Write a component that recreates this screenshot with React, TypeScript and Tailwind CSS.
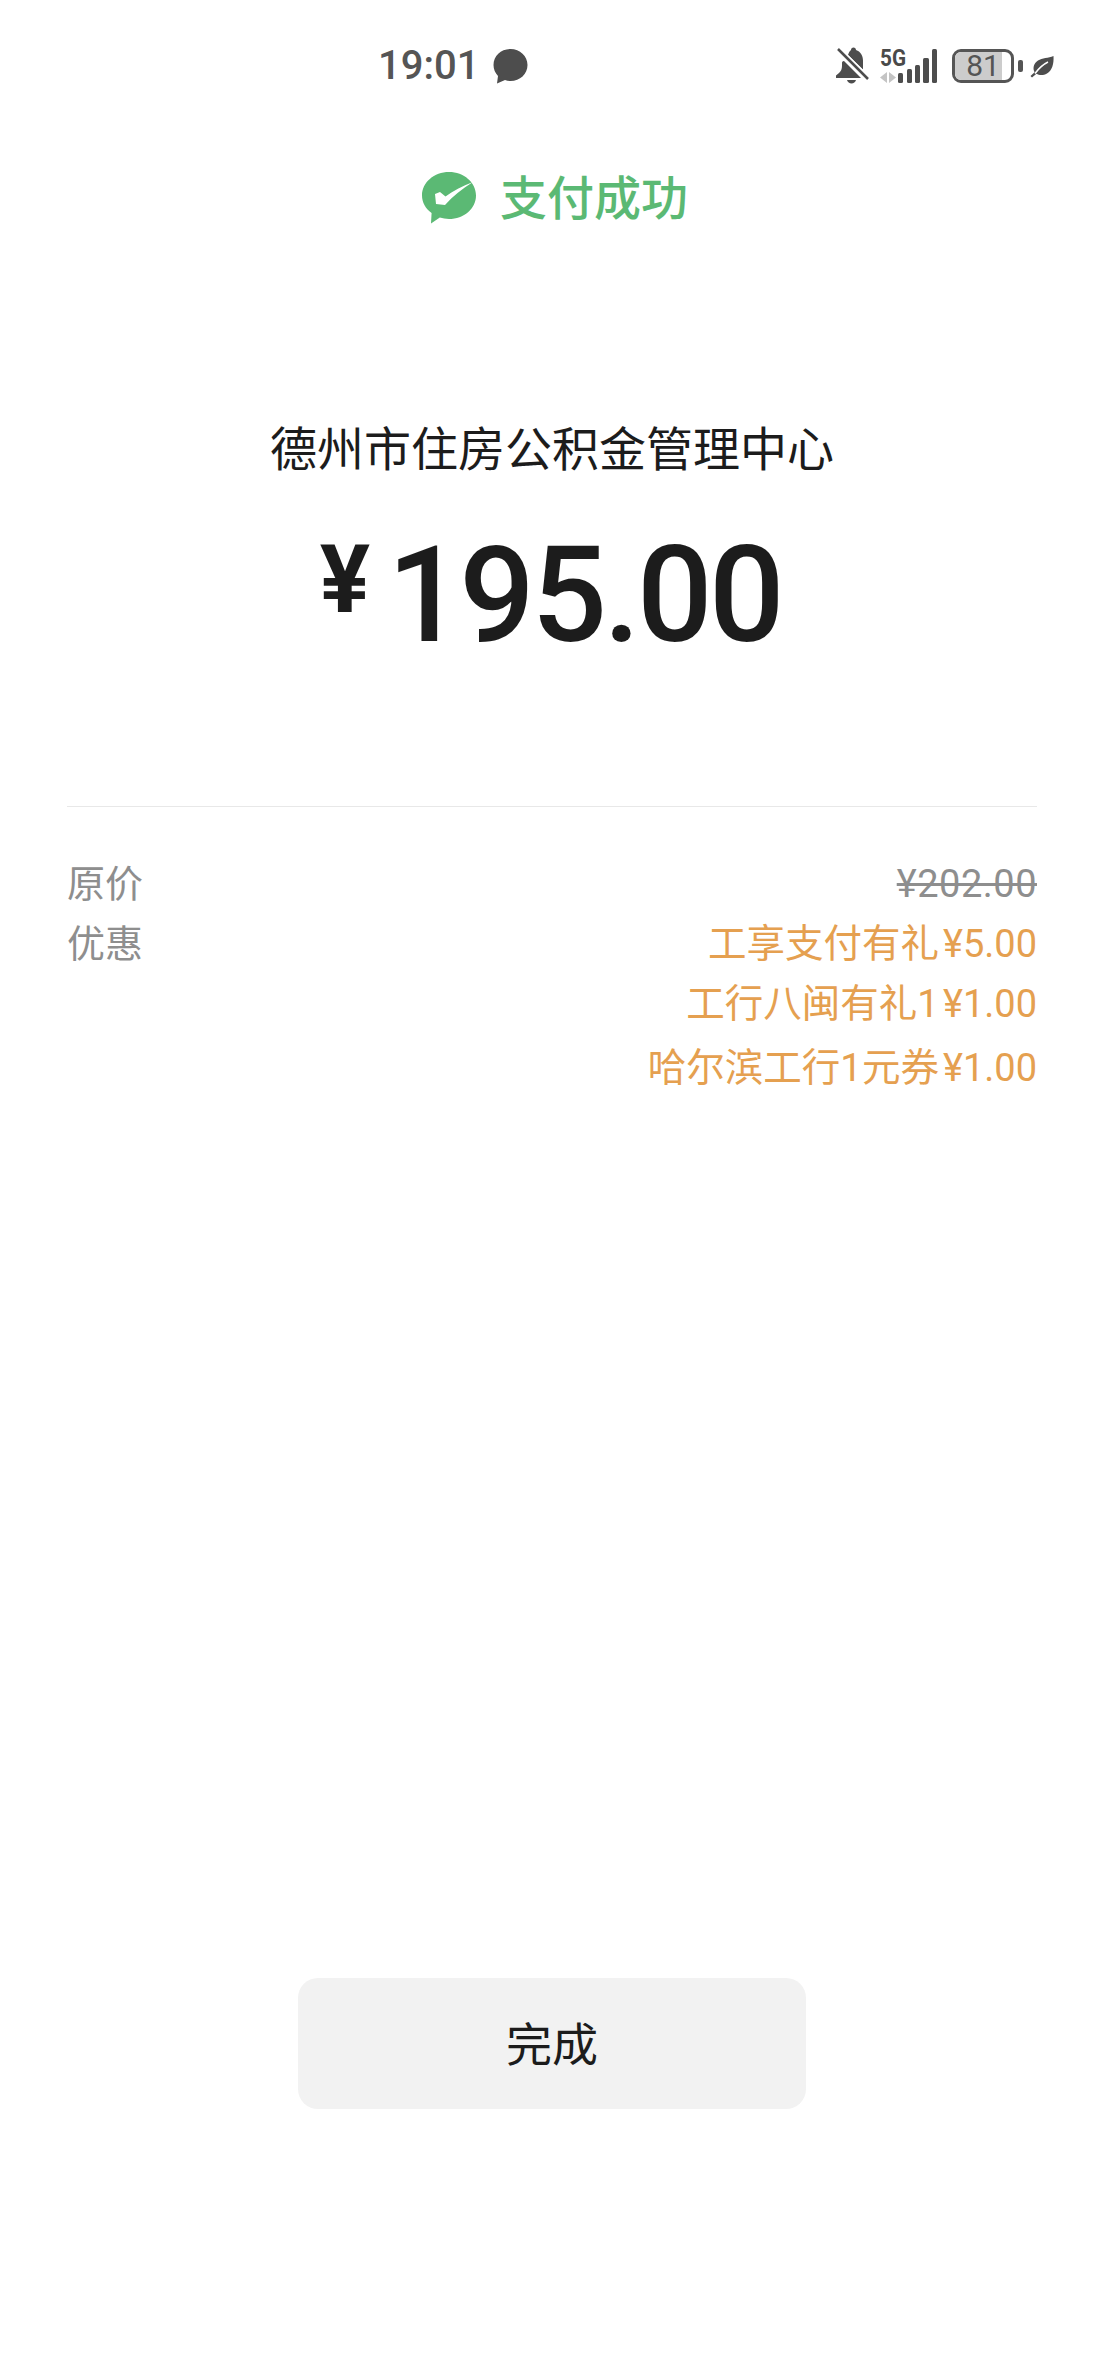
const font = "font-['Roboto','Noto_Sans_CJK_SC',sans-serif]"

function WeChatBubble() {
  return (
    <svg width="35" height="36" viewBox="0 0 35 36">
      <path d="M17.500 1C27 1 34.500 8 34.500 17S27 33 17.500 33c-2 0-3.800-.3-5.500-.9L4 35.500l1-7.500C2.200 25 .5 21.200.5 17 .5 8 8 1 17.500 1z" fill="#4d4d4d" />
    </svg>
  )
}

function SignalIcons() {
  return (
    <svg width="58" height="42" viewBox="0 0 58 42">
      <text x="0" y="21" fontSize="23" fontWeight="700" fill="#4a4a4a" fontFamily="Roboto" textLength="26" lengthAdjust="spacingAndGlyphs">5G</text>
      <path d="M7 27v11l-7-5.500zM9 38V27l7 5.500z" fill="#c4c4c4" />
      <rect x="18" y="28" width="5" height="10" rx="1.500" fill="#4d4d4d" />
      <rect x="27" y="24" width="5" height="14" rx="1.500" fill="#4d4d4d" />
      <rect x="35" y="20" width="5" height="18" rx="1.500" fill="#4d4d4d" />
      <rect x="43" y="13" width="6" height="25" rx="1.500" fill="#4d4d4d" />
      <rect x="52" y="4" width="5" height="34" rx="1.500" fill="#4d4d4d" />
    </svg>
  )
}

function StatusBar() {
  return (
    <div className="h-[132px] pl-[378px] pr-[50px] flex items-center justify-between text-[#555555]">
      <div className="flex items-center gap-[14px]">
        <span className="text-[40px] leading-none font-medium">19:01</span>
        <WeChatBubble />
      </div>
      <div className="flex items-center">
        <svg width="34" height="40" viewBox="0 0 34 40" className="mr-[10px]">
          <path d="M15 4c0-1.500 1-2.500 2.500-2.500S20 2.500 20 4c4.500 1.500 7 5.500 7 10.500v9L12 9c.8-2.300 1.500-4 3-5zM8 15l17 17H0v-2.500l3-2.500c2-2 3-4 3-7v-3c0-1 .3-2 2-2z" fill="#4d4d4d" />
          <path d="M11 34h9c-.6 2-2.400 3.500-4.500 3.500S11.600 36 11 34z" fill="#4d4d4d" />
          <path d="M2 3l30 30" stroke="#fff" strokeWidth="6" />
          <path d="M2 3l30 30" stroke="#4d4d4d" strokeWidth="2.500" />
        </svg>
        <SignalIcons />
        <div className="ml-[14px] relative w-[62px] h-[34px] rounded-[9px] border-[3px] border-[#555555] overflow-hidden flex items-center justify-center">
          <div className="absolute inset-y-0 left-0 w-[47px] bg-[#cccccc]" />
          <span className="relative text-[30px] leading-none">81</span>
        </div>
        <div className="ml-[4px] w-[5px] h-[12px] rounded-[2px] bg-[#555555]" />
        <svg width="24" height="23" viewBox="0 0 24 23" className="ml-[7px]">
          <path d="M23.500 1c.5 8-1.500 14.500-6.500 17.500-4 2.300-8 1.800-10.500.2L2 22.500.5 21l4.100-3.800C2.500 13.500 3.500 8.500 8 5.500 12 3 18.500 3 23.500 1z" fill="#4d4d4d" />
          <path d="M5 18.500C9 13 13 9.500 18 7" stroke="#fff" strokeWidth="1.500" fill="none" />
        </svg>
      </div>
    </div>
  )
}

function SuccessHeader() {
  return (
    <div className="mt-[40px] pl-[6px] flex items-center justify-center gap-[24px]">
      <svg width="54" height="52" viewBox="0 0 54 52">
        <path d="M27 0c14.900 0 27 10.500 27 23.500S41.900 47 27 47c-3.200 0-6.300-.5-9.200-1.400L9 51.500 9.600 41C3.700 36.700 0 30.500 0 23.500 0 10.500 12.100 0 27 0z" fill="#5bb974" />
        <path d="M13 22l5-2 5.500 4.500C31 19 40 14 51 10 40 17 31 24 23 33l-9-1z" fill="#fff" />
      </svg>
      <span className="text-[47px] leading-none font-medium text-[#5bb974]">支付成功</span>
    </div>
  )
}

function Amount() {
  return (
    <div className="mt-[198px] flex flex-col items-center">
      <div className="text-[47px] leading-[56px] text-[#1c1c1c]">德州市住房公积金管理中心</div>
      <div className="mt-[51px] pr-[3px] flex items-start text-[#1c1c1c] font-medium leading-none">
        <span className="text-[94px] leading-none mt-[4px] mr-[17px] font-bold">¥</span>
        <span className="text-[133px] leading-none tracking-[-3.5px]">195.00</span>
      </div>
    </div>
  )
}

const discounts = [
  { label: '工享支付有礼', amount: '¥5.00' },
  { label: '工行八闽有礼1', amount: '¥1.00' },
  { label: '哈尔滨工行1元券', amount: '¥1.00', extra: 'mt-[4px]' },
]

function Breakdown() {
  return (
    <div className="mt-[144px] mx-[67px] border-t border-[#e8e8e8] pt-[52px] text-[38px] leading-[50px]">
      <div className="flex justify-between text-[#8e8e8e]">
        <span>原价</span>
        <span className="line-through tracking-[0.5px]">¥202.00</span>
      </div>
      <div className="mt-[10px] flex justify-between">
        <span className="text-[#8e8e8e]">优惠</span>
        <div className="flex flex-col items-end gap-[10px] text-[#e5a050]">
          {discounts.map((d) => (
            <span key={d.label} className={d.extra}>
              <span className="text-[38.5px]">{d.label}</span>
              <span className="ml-[4px]">{d.amount}</span>
            </span>
          ))}
        </div>
      </div>
    </div>
  )
}

export default function App() {
  return (
    <div className={`${font} w-[1104px] h-[2376px] bg-white flex flex-col`}>
      <StatusBar />
      <SuccessHeader />
      <Amount />
      <Breakdown />
      <div className="mt-auto mb-[267px] flex justify-center">
        <button className="w-[508px] h-[131px] pt-[4px] rounded-[20px] bg-[#f2f2f2] text-[46px] text-[#1c1c1c]">完成</button>
      </div>
    </div>
  )
}
